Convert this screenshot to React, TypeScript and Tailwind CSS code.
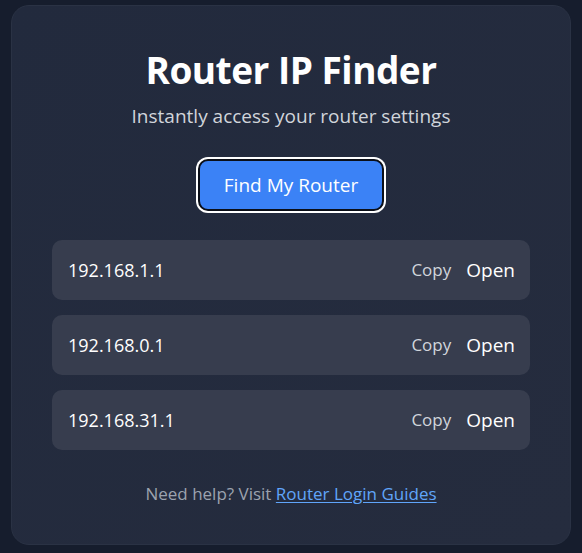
const ips = ["192.168.1.1", "192.168.0.1", "192.168.31.1"];

export default function App() {
  return (
    <div
      className="min-h-screen bg-[#161d2d] px-[11px] pt-[5px] pb-[8px]"
      style={{ fontFamily: '"Open Sans", "Noto Sans", sans-serif' }}
    >
      <div className="h-[540px] rounded-[18px] bg-gradient-to-br from-[#222a3d] to-[#252c3e] border border-[#2a3244] px-10 pt-[40px] flex flex-col items-center">
        {/* Header */}
        <h1 className="text-[37px] leading-[48px] font-bold text-white tracking-[-0.5px]">Router IP Finder</h1>
        <p className="mt-[10px] text-[19px] leading-6 text-[#d1d5db]">Instantly access your router settings</p>

        <button className="mt-[31px] w-[186px] h-[52px] rounded-[10px] bg-[#3b82f6] border-2 border-[#0b0f18] ring-2 ring-white text-white text-[19px]">
          Find My Router
        </button>

        {/* IP rows */}
        <div className="mt-[29px] w-full flex flex-col gap-[15px]">
          {ips.map((ip) => (
            <div
              key={ip}
              className="h-[60px] rounded-[10px] bg-[#373d4e] flex items-center pl-4 pr-[15px]"
            >
              <span className="text-[18px] text-white">{ip}</span>
              <span className="ml-auto text-[17px] text-[#d1d5db]">Copy</span>
              <span className="ml-[15px] text-[19px] text-white">Open</span>
            </div>
          ))}
        </div>

        <p className="mt-[31px] text-[17px] text-[#9ca3af]">
          Need help? Visit{" "}
          <a href="#" className="text-[#60a5fa] underline underline-offset-2">
            Router Login Guides
          </a>
        </p>
      </div>
    </div>
  );
}
